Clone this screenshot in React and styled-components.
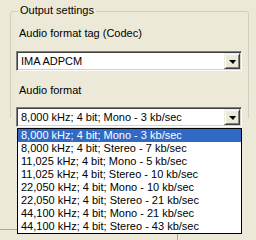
import React from 'react'
import styled, { createGlobalStyle } from 'styled-components'

const Global = createGlobalStyle`
  html, body {
    margin: 0;
    padding: 0;
    background: #ece9d8;
  }
  body {
    font-family: 'Liberation Sans', Arial, sans-serif;
    font-size: 11px;
    color: #000000;
  }
`

const Page = styled.div`
  position: relative;
  width: 256px;
  height: 240px;
  overflow: hidden;
  display: flex;
  flex-direction: column;
  background: #ece9d8;
`

const Group = styled.div`
  position: relative;
  margin: 11px 0 0 10px;
  width: 239px;
  padding: 16px 0 0 6px;
  box-sizing: border-box;
  display: flex;
  flex-direction: column;
  &::before {
    content: '';
    position: absolute;
    top: 0;
    left: 0;
    right: 0;
    height: 106px;
    border: 1px solid #d0d0bf;
    border-bottom: none;
    border-radius: 3px 3px 0 0;
    pointer-events: none;
  }
`

const Legend = styled.span`
  position: absolute;
  top: -7px;
  left: 8px;
  padding: 0 2px 0 2px;
  line-height: 13px;
  background: #ece9d8;
`

const Label = styled.div`
  padding-left: 3px;
  line-height: 13px;
  height: 13px;
  margin-bottom: ${p => p.$gap}px;
`

const Combo = styled.div`
  position: relative;
  display: flex;
  align-items: center;
  width: 226px;
  height: 20px;
  box-sizing: border-box;
  background: #ffffff;
  border: 1px solid;
  border-color: #808080 #ffffff #ffffff #808080;
  box-shadow: inset 1px 1px #404040, inset -1px -1px #d4d0c8;
  padding: 1px 1px 1px 4px;
  margin-bottom: ${p => p.$gap}px;
`

const ComboText = styled.span`
  flex: 1;
  line-height: 16px;
  white-space: nowrap;
`

const DropButton = styled.div`
  width: 16px;
  height: 16px;
  box-sizing: border-box;
  display: flex;
  align-items: center;
  justify-content: center;
  background: #ece9d8;
  border: 1px solid;
  border-color: #ece9d8 #404040 #404040 #ece9d8;
  box-shadow: inset 1px 1px #ffffff, inset -1px -1px #808080;
`

const Arrow = styled.span`
  width: 0;
  height: 0;
  border-left: 4px solid transparent;
  border-right: 3px solid transparent;
  border-top: 4px solid #000000;
  margin-top: 1px;
`

const List = styled.ul`
  position: absolute;
  top: 128px;
  left: 17px;
  width: 225px;
  margin: 0;
  padding: 0;
  list-style: none;
  box-sizing: border-box;
  background: #ffffff;
  border: 1px solid #000000;
`

const Item = styled.li`
  height: 13px;
  line-height: 13px;
  padding-left: 3px;
  white-space: nowrap;
  background: ${p => (p.$active ? '#316ac5' : '#ffffff')};
  color: ${p => (p.$active ? '#ffffff' : '#000000')};
`

const Footer = styled.div`
  margin-top: auto;
  width: 200px;
  height: 10px;
  display: flex;
  border-top: 1px solid #aca899;
`

const FooterCell = styled.div`
  width: ${p => p.$w}px;
  border-left: ${p => (p.$divider ? '1px solid #aca899' : 'none')};
`

const formats = [
  '8,000 kHz; 4 bit; Mono - 3 kb/sec',
  '8,000 kHz; 4 bit; Stereo - 7 kb/sec',
  '11,025 kHz; 4 bit; Mono - 5 kb/sec',
  '11,025 kHz; 4 bit; Stereo - 10 kb/sec',
  '22,050 kHz; 4 bit; Mono - 10 kb/sec',
  '22,050 kHz; 4 bit; Stereo - 21 kb/sec',
  '44,100 kHz; 4 bit; Mono - 21 kb/sec',
  '44,100 kHz; 4 bit; Stereo - 43 kb/sec',
]

const ComboBox = ({ value, gap }) => (
  <Combo $gap={gap}>
    <ComboText>{value}</ComboText>
    <DropButton>
      <Arrow />
    </DropButton>
  </Combo>
)

const App = () => (
  <Page>
    <Global />
    <Group>
      <Legend>Output settings</Legend>
      <Label $gap={11}>Audio format tag (Codec)</Label>
      <ComboBox value="IMA ADPCM" gap={13} />
      <Label $gap={10}>Audio format</Label>
      <ComboBox value={formats[0]} gap={0} />
    </Group>
    <Footer>
      <FooterCell $w={177} />
      <FooterCell $w={22} $divider />
    </Footer>
    <List>
      {formats.map((f, i) => (
        <Item key={f} $active={i === 0}>
          {f}
        </Item>
      ))}
    </List>
  </Page>
)

export default App
